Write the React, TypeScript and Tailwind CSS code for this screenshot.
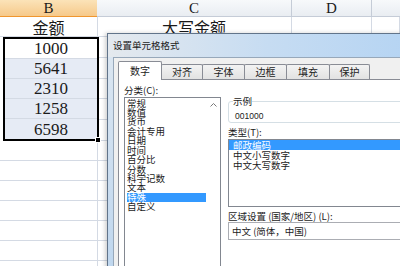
import React from 'react';

const CJK = "font-['Noto_Sans_CJK_SC','Noto_Sans',sans-serif]";
const SERIF = "font-['Liberation_Serif','Noto_Sans_CJK_SC',serif]";

const AMOUNTS = ['1000', '5641', '2310', '1258', '6598'];
const CATEGORIES = ['常规', '数值', '货币', '会计专用', '日期', '时间', '百分比', '分数', '科学记数', '文本', '特殊', '自定义'];
const TYPES = ['邮政编码', '中文小写数字', '中文大写数字'];
const TABS = [
  { label: '数字', w: 'w-[44px]' },
  { label: '对齐', w: 'w-[42px]' },
  { label: '字体', w: 'w-[43px]' },
  { label: '边框', w: 'w-[43px]' },
  { label: '填充', w: 'w-[44px]' },
  { label: '保护', w: 'w-[41px]' },
];

const EmptyRows = ({ n }: { n: number }) => (
  <>
    {Array.from({ length: n }).map((_, i) => (
      <div key={i} className="h-[20px] shrink-0 border-b border-r border-[#d4dae4]" />
    ))}
  </>
);

const Sheet = () => (
  <div className={`flex h-full ${SERIF} text-[#1a1a1a]`}>
    {/* column B */}
    <div className="w-[98px] shrink-0 flex flex-col">
      <div className="h-[17px] shrink-0 flex items-center justify-center text-[15px] leading-none bg-gradient-to-b from-[#fbe3b8] to-[#f6c98a] border-b border-b-[#f0962f] border-r border-r-[#e0b070]">
        B
      </div>
      <div className="h-[20px] shrink-0 flex items-center justify-center text-[17px] border-b border-r border-[#d4dae4]">
        <span className={CJK + ' text-[16px] leading-none'}>金额</span>
      </div>
      <div className="relative z-10 ml-[3px] w-[96px] shrink-0 border-2 border-black">
        {AMOUNTS.map((v, i) => (
          <div
            key={v}
            className={`h-[20px] flex items-center justify-center text-[17px] leading-none ${
              i === 0 ? 'bg-white' : 'bg-[#e6ebf5]'
            } ${i < AMOUNTS.length - 1 ? 'border-b border-[#d4dae4]' : ''}`}
          >
            {v}
          </div>
        ))}
        <div className="absolute -right-[4px] -bottom-[4px] w-[6px] h-[6px] bg-black border border-white" />
      </div>
      <EmptyRows n={7} />
    </div>

    {/* column C */}
    <div className="w-[195px] shrink-0 flex flex-col -ml-px">
      <div className="h-[17px] shrink-0 flex items-center justify-center text-[15px] leading-none bg-gradient-to-b from-[#f7f9fb] to-[#e9edf2] border-b border-r border-[#c5ccd7]">
        C
      </div>
      <div className="h-[20px] shrink-0 flex items-center justify-center border-b border-r border-[#d4dae4]">
        <span className={CJK + ' text-[16px] leading-none'}>大写金额</span>
      </div>
      {AMOUNTS.map((v) => (
        <div key={v} className="h-[20.8px] shrink-0 border-b border-r border-[#d4dae4]" />
      ))}
      <EmptyRows n={7} />
    </div>

    {/* column D */}
    <div className="w-[80px] shrink-0 flex flex-col">
      <div className="h-[17px] shrink-0 flex items-center justify-center text-[15px] leading-none bg-gradient-to-b from-[#f7f9fb] to-[#e9edf2] border-b border-r border-[#c5ccd7]">
        D
      </div>
      <div className="h-[20px] shrink-0 border-b border-r border-[#d4dae4]" />
      <EmptyRows n={12} />
    </div>

    {/* column E */}
    <div className="flex-1 flex flex-col">
      <div className="h-[17px] shrink-0 bg-gradient-to-b from-[#f7f9fb] to-[#e9edf2] border-b border-[#c5ccd7]" />
      <EmptyRows n={13} />
    </div>
  </div>
);

const ListItem = ({ text, selected, h }: { text: string; selected: boolean; h: string }) => (
  <div className={`${h} whitespace-nowrap ${selected ? 'bg-[#3399ff] text-white' : ''}`}>{text}</div>
);

const FormatDialog = () => (
  <div
    className={`absolute left-[107px] top-[33px] -right-[30px] -bottom-[30px] flex flex-col border border-[#61748a] bg-gradient-to-b from-[#dde7f1] to-[#bcd5ee] shadow-[-2px_0_4px_rgba(0,0,0,0.18)] ${CJK} text-[#1b1b1b]`}
  >
    <div className="h-[23px] shrink-0 flex items-center pl-[5px] bg-gradient-to-r from-[#e4e9ee] via-[#c6dcf2] to-[#b3d3f3] text-[9.5px] leading-none">
      设置单元格格式
    </div>
    <div className="flex-1 flex pl-[5px]">
      <div className="flex-1 flex flex-col bg-[#f0f0f0] border-l border-t border-[#97a8ba] pl-[4px] pt-[3px]">
        {/* tabs */}
        <div className="h-[18px] shrink-0 flex items-end text-[10px] leading-none">
          {TABS.map((t, i) =>
            i === 0 ? (
              <div
                key={t.label}
                className={`${t.w} h-[19px] -mb-px relative z-10 flex items-center justify-center bg-white border-x border-t border-[#898c95] rounded-t-[2px]`}
              >
                {t.label}
              </div>
            ) : (
              <div
                key={t.label}
                className={`${t.w} h-[15px] -ml-px flex items-center justify-center bg-gradient-to-b from-[#f3f3f3] to-[#e2e2e2] border-x border-t border-[#898c95] rounded-t-[2px]`}
              >
                {t.label}
              </div>
            )
          )}
        </div>

        {/* pane */}
        <div className="flex-1 flex gap-[7px] bg-white border border-[#898c95] pt-[5px] pl-[5px] text-[9.5px]">
          <div className="w-[97px] shrink-0 flex flex-col">
            <div className="h-[11px] leading-[11px]">分类(C):</div>
            <div className="flex-1 mt-[1px] flex border border-[#828790]">
              <div className="w-[79px] ml-[2px] pt-[0.5px] leading-[9.45px]">
                {CATEGORIES.map((c) => (
                  <ListItem key={c} text={c} selected={c === '特殊'} h="h-[9.45px]" />
                ))}
              </div>
              <div className="w-[14px] flex justify-center pt-[5px]">
                <svg width="7" height="4" viewBox="0 0 7 4">
                  <path d="M0.5 3.5 L3.5 0.5 L6.5 3.5" fill="none" stroke="#7a7a7a" strokeWidth="1" />
                </svg>
              </div>
            </div>
          </div>

          <div className="flex-1 flex flex-col">
            <fieldset className="mt-[11px] border border-[#d5dfe5] rounded-[3px] pl-[4px] pb-[1px]">
              <legend className="leading-[11px] px-0">示例</legend>
              <div className="pt-[4px] pl-[2px] leading-[10px] text-[8.5px] font-['Liberation_Sans',sans-serif]">
                001000
              </div>
            </fieldset>
            <div className="mt-[4px] leading-[10px]">类型(T):</div>
            <div className="mt-[2px] h-[68px] border border-[#828790] leading-[10px] pt-0">
              {TYPES.map((t, i) => (
                <div key={t} className={`h-[10px] pl-[4px] ${i === 0 ? 'bg-[#3399ff] text-white' : ''}`}>
                  {t}
                </div>
              ))}
            </div>
            <div className="mt-[4px] leading-[10px] whitespace-nowrap">区域设置 (国家/地区) (L):</div>
            <div className="mt-[1px] h-[18px] flex items-center pl-[3px] border border-[#abadb3] whitespace-nowrap">
              中文 (简体，中国)
            </div>
          </div>
        </div>
      </div>
    </div>
  </div>
);

export default function App() {
  return (
    <div className="relative w-[400px] h-[266px] overflow-hidden bg-white">
      <Sheet />
      <FormatDialog />
    </div>
  );
}
